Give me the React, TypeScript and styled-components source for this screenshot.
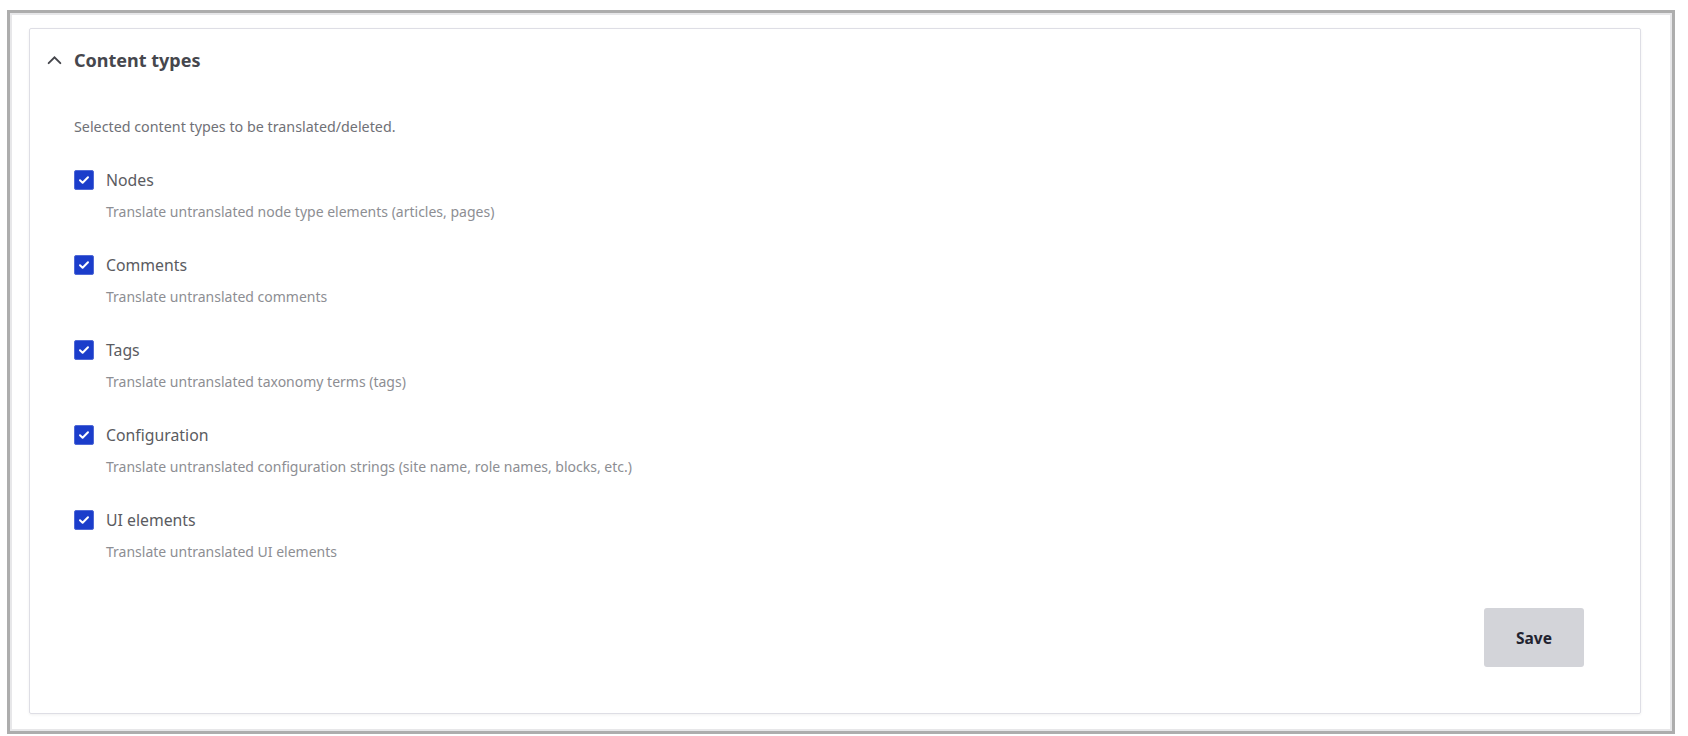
import React from 'react'
import styled, { createGlobalStyle } from 'styled-components'

const GlobalStyle = createGlobalStyle`
  html, body {
    margin: 0;
    padding: 0;
    background: #ffffff;
  }
  body {
    font-family: "Noto Sans", "Open Sans", Arial, sans-serif;
    color: #55565b;
  }
`

const Frame = styled.div`
  box-sizing: border-box;
  margin: 10px 0 0 7px;
  width: 1668px;
  height: 724px;
  border: 3px solid #adadad;
  box-shadow: inset 0 0 0 2px #e7e7e9;
  padding: 15px 31px 17px 19px;
`

const Card = styled.section`
  box-sizing: border-box;
  height: 100%;
  border: 1px solid #dedee5;
  border-radius: 2px;
  box-shadow: 0 1px 3px rgba(0, 0, 0, 0.06);
  display: flex;
  flex-direction: column;
  padding: 0 56px 0 44px;
`

const Summary = styled.div`
  display: flex;
  align-items: center;
  gap: 11px;
  padding: 20px 0;
  margin-left: -28px;
  font-size: 18px;
  line-height: 22px;
  font-weight: 700;
  color: #46474d;
`

const Body = styled.div`
  display: flex;
  flex-direction: column;
  flex: 1;
`

const Intro = styled.p`
  margin: 26px 0 0;
  font-size: 14.3px;
  line-height: 20px;
  color: #707177;
`

const Item = styled.div`
  margin-top: 32px;
  display: grid;
  grid-template-columns: 20px 1fr;
  column-gap: 12px;
  row-gap: 11px;
  align-items: center;
`

const Box = styled.span`
  box-sizing: border-box;
  width: 20px;
  height: 20px;
  border-radius: 2px;
  background: #1b3dcb;
  border: 1px solid #5069d6;
  display: flex;
  align-items: center;
  justify-content: center;
`

const Label = styled.span`
  font-size: 15.8px;
  line-height: 22px;
  color: #5a5b61;
`

const Desc = styled.span`
  grid-column: 2;
  font-size: 14px;
  line-height: 20px;
  color: #8d8e93;
`

const Actions = styled.div`
  display: flex;
  justify-content: flex-end;
  margin-top: 46px;
`

const Button = styled.button`
  width: 100px;
  height: 59px;
  border: none;
  border-radius: 3px;
  background: #d3d4d9;
  color: #222330;
  font-family: inherit;
  font-size: 15.5px;
  font-weight: 700;
  cursor: pointer;
`

const items = [
  { label: 'Nodes', desc: 'Translate untranslated node type elements (articles, pages)' },
  { label: 'Comments', desc: 'Translate untranslated comments' },
  { label: 'Tags', desc: 'Translate untranslated taxonomy terms (tags)' },
  { label: 'Configuration', desc: 'Translate untranslated configuration strings (site name, role names, blocks, etc.)' },
  { label: 'UI elements', desc: 'Translate untranslated UI elements' },
]

const Check = () => (
  <svg width="12" height="12" viewBox="0 0 12 12" fill="none">
    <path d="M2 6.3l2.6 2.5L10 3.2" stroke="#fff" strokeWidth="2" strokeLinecap="round" strokeLinejoin="round" />
  </svg>
)

const Chevron = () => (
  <svg width="17" height="17" viewBox="0 0 16 16" fill="none">
    <path d="M2.5 10.5L8 5l5.5 5.5" stroke="#45464c" strokeWidth="1.8" strokeLinecap="round" />
  </svg>
)

const App = (): JSX.Element => {
  return (
    <>
      <GlobalStyle />
      <Frame>
        <Card>
          <Summary>
            <Chevron />
            Content types
          </Summary>
          <Body>
            <Intro>Selected content types to be translated/deleted.</Intro>
            {items.map(item => (
              <Item key={item.label}>
                <Box><Check /></Box>
                <Label>{item.label}</Label>
                <Desc>{item.desc}</Desc>
              </Item>
            ))}
            <Actions>
              <Button>Save</Button>
            </Actions>
          </Body>
        </Card>
      </Frame>
    </>
  )
}

export default App
